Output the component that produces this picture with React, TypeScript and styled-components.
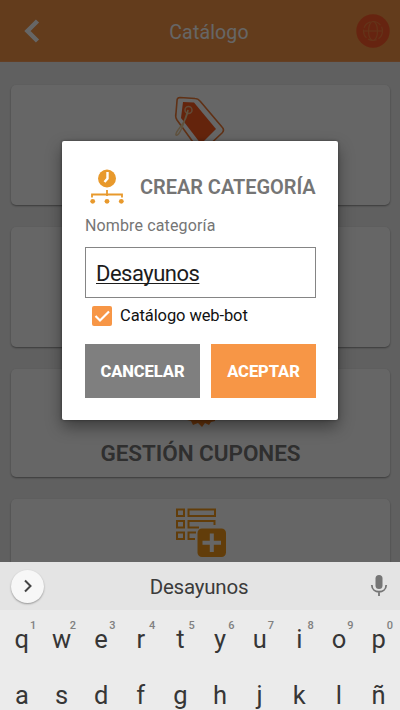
import React from "react";
import styled, { createGlobalStyle } from "styled-components";

const GlobalStyle = createGlobalStyle`
  * { box-sizing: border-box; }
  body { margin: 0; background: #f0f0f0; font-family: Roboto, "Liberation Sans", sans-serif; }
  button, input { font-family: inherit; }
`;

const Screen = styled.div`
  position: relative;
  width: 400px;
  height: 710px;
  overflow: hidden;
  display: flex;
  flex-direction: column;
`;

const Page = styled.div`
  height: 562px;
  overflow: hidden;
  background: #f0f0f0;
  flex: none;
`;

const Header = styled.header`
  height: 62px;
  background: #f79646;
  display: grid;
  grid-template-columns: 88px 1fr 70px;
  align-items: center;
  color: #fff;
  border-bottom: 1px solid #fb9f5a;
  svg { display: block; }
`;

const HeaderTitle = styled.h1`
  margin: 5px 0 0;
  font-size: 19.5px;
  font-weight: 400;
  line-height: 24px;
  letter-spacing: 0.15px;
  text-align: center;
`;

const BackButton = styled.div`
  padding-left: 23px;
`;

const Globe = styled.div`
  padding-left: 26px;
`;

const CardList = styled.main`
  display: flex;
  flex-direction: column;
  gap: 22px;
  padding: 23px 10px 0 11px;
`;

const Card = styled.section<{ $height: number }>`
  height: ${(p) => p.$height}px;
  flex: none;
  display: flex;
  flex-direction: column;
  align-items: center;
  background: #fff;
  border-radius: 5px;
  box-shadow: 0 1px 2px rgba(0, 0, 0, 0.4);
  svg { display: block; flex: none; }
`;

const IconSlot = styled.div<{ $top: number }>`
  padding-top: ${(p) => p.$top}px;
  flex: none;
`;

const CardTitle = styled.h2`
  margin: 12px 0 0;
  font-size: 22.5px;
  line-height: 28px;
  font-weight: 600;
  letter-spacing: -0.05px;
  color: #757575;
  white-space: nowrap;
`;

const Scrim = styled.div`
  position: absolute;
  inset: 0 0 148px 0;
  background: rgba(0, 0, 0, 0.6);
  display: flex;
  justify-content: center;
  align-items: flex-start;
  padding-top: 141px;
`;

const Dialog = styled.div`
  width: 276px;
  height: 279px;
  padding: 25px 22px 22px 23px;
  background: #fff;
  border-radius: 2px;
  box-shadow: 0 7px 16px rgba(0, 0, 0, 0.4), 0 0 3px rgba(0, 0, 0, 0.4);
  display: flex;
  flex-direction: column;
`;

const DialogHead = styled.div`
  display: flex;
  height: 40px;
  gap: 15px;
  padding-left: 5px;
  svg { flex: none; }
`;

const DialogTitle = styled.h2`
  margin: 9px 0 0;
  font-size: 20px;
  line-height: 24px;
  font-weight: 600;
  letter-spacing: -0.04px;
  color: #757575;
  white-space: nowrap;
`;

const Label = styled.label`
  margin-top: 10px;
  font-size: 16px;
  line-height: 20px;
  letter-spacing: 0.14px;
  color: #757575;
`;

const Field = styled.div`
  margin-top: 11px;
  height: 51px;
  border: 1px solid #858585;
  padding: 0 10px;
  font-size: 22px;
  line-height: 52px;
  letter-spacing: -0.5px;
  color: #1c1c1c;
  span {
    text-decoration: underline;
    text-decoration-thickness: 1px;
    text-decoration-skip-ink: none;
    text-underline-offset: 2px;
  }
`;

const CheckRow = styled.div`
  display: flex;
  align-items: center;
  gap: 8px;
  height: 20px;
  margin: 8px 0 0 7px;
  font-size: 16.5px;
  line-height: 20px;
  letter-spacing: -0.1px;
  color: #111;
`;

const Actions = styled.div`
  display: grid;
  grid-template-columns: 115px 105px;
  gap: 11px;
  margin-top: 18px;
`;

const ActionButton = styled.button<{ $primary?: boolean }>`
  height: 54px;
  padding: 1px 0 0;
  border: 0;
  background: ${(p) => (p.$primary ? "#f79646" : "#7f7f7f")};
  color: #fff;
  font-size: 16.5px;
  font-weight: 800;
  letter-spacing: -0.05px;
`;

const Keyboard = styled.div`
  height: 148px;
  flex: none;
  overflow: hidden;
  background: #ebebeb;
`;

const Suggestions = styled.div`
  height: 48px;
  background: #e4e4e4;
  display: grid;
  grid-template-columns: 70px 1fr 72px;
  align-items: center;
`;

const Expand = styled.div`
  width: 33px;
  height: 33px;
  margin-left: 11px;
  border-radius: 50%;
  background: #f7f7f7;
  box-shadow: 0 1px 2px rgba(0, 0, 0, 0.35);
  display: grid;
  place-items: center;
`;

const Word = styled.div`
  text-align: center;
  font-size: 20.5px;
  line-height: 26px;
  letter-spacing: -0.2px;
  margin-top: 2px;
  color: #3b3b3b;
`;

const Mic = styled.div`
  padding-left: 42px;
  svg { display: block; }
`;

const Keys = styled.div`
  display: grid;
  grid-template-columns: repeat(10, 39.65px);
  grid-auto-rows: 56px;
  padding-left: 2px;
`;

const Key = styled.div`
  position: relative;
  text-align: center;
  font-size: 25.5px;
  line-height: 30px;
  padding-top: 14px;
  color: #363636;
`;

const Hint = styled.span`
  position: absolute;
  top: 9px;
  left: 28px;
  font-size: 11px;
  line-height: 14px;
  font-weight: 500;
  color: #808080;
`;

const TagIcon = () => (
  <svg width="56" height="58" viewBox="0 0 56 58" fill="none">
    <path d="M7 1.5 22 2.5Q25 2.500 27 5L49 31Q52 34 49 37L31 54Q28 56 25 53L4 24Q2 21 3 17L4 5Q4 1.5 7 1.5Z" stroke="#ef7a35" strokeWidth="1.6" />
    <path d="M10 6 21 6.5 43 33 28 48 8 22Z" fill="#fa5a20" />
    <circle cx="15.5" cy="14" r="3.500" stroke="#f5b98a" strokeWidth="1.5" />
    <path d="M15 14C12 23 7 41 3 39C1 35 14 28 15 14Z" stroke="#f0cd9c" strokeWidth="1.5" />
  </svg>
);

const CouponIcon = () => (
  <svg width="34" height="40" viewBox="0 0 34 40">
    <path d="M3 18V33L7 34 9 38 14 36 18 40 21 36 25 38 27 35 31 34V18Z" fill="#ff7f1e" />
  </svg>
);

const ListPlusIcon = () => (
  <svg width="52" height="51" viewBox="0 0 52 51" fill="none">
    <g stroke="#f59a1b" strokeWidth="2">
      <path d="M2 1.5H9V8H2ZM2 13H9V19.5H2ZM2 24.5H9V31H2Z" />
      <path d="M13.5 1.5H40V8H13.5ZM39.5 17V13H13.5V19.5H24M21 24.5H13.5V31H20" />
    </g>
    <rect x="22.5" y="20.5" width="28.5" height="28.5" rx="4.5" fill="#f59a1b" />
    <path d="M36.8 25.5V44M27.5 34.7H46" stroke="#fff" strokeWidth="4" />
  </svg>
);

const CategoryIcon = () => (
  <svg width="35" height="38" viewBox="0 0 35 38" fill="none">
    <circle cx="17" cy="12.5" r="9" fill="#e8992c" />
    <path d="M17.5 6V12.5L14.500 16" stroke="#fff" strokeWidth="2.4" />
    <path d="M17 24V30M2 31.500V28.500H32V31.500" stroke="#e8992c" strokeWidth="1.8" />
    <circle cx="2.7" cy="35.3" r="2.4" fill="#e8992c" />
    <circle cx="17" cy="35.3" r="2.4" fill="#e8992c" />
    <circle cx="31.3" cy="35.3" r="2.4" fill="#e8992c" />
  </svg>
);

const letters = "qwertyuiopasdfghjklñ".split("");

export default function App() {
  return (
    <Screen>
      <GlobalStyle />
      <Page>
        <Header>
          <BackButton>
            <svg width="18" height="24" viewBox="0 0 18 24" fill="none">
              <path d="M14.5 2 4.5 12 14.5 22" stroke="#fff" strokeWidth="4.5" />
            </svg>
          </BackButton>
          <HeaderTitle>Catálogo</HeaderTitle>
          <Globe>
            <svg width="34" height="34" viewBox="0 0 34 34" fill="none">
              <circle cx="17" cy="17" r="16.7" fill="#ff5a28" />
              <g stroke="#f9803f" strokeWidth="1.2">
                <circle cx="17" cy="17" r="9.5" strokeDasharray="9 2" />
                <ellipse cx="17" cy="17" rx="4.5" ry="9.5" />
                <path d="M7 17H27" />
              </g>
            </svg>
          </Globe>
        </Header>
        <CardList>
          <Card $height={120}>
            <IconSlot $top={11}><TagIcon /></IconSlot>
          </Card>
          <Card $height={120} />
          <Card $height={108}>
            <IconSlot $top={18}><CouponIcon /></IconSlot>
            <CardTitle>GESTIÓN CUPONES</CardTitle>
          </Card>
          <Card $height={108}>
            <IconSlot $top={9}><ListPlusIcon /></IconSlot>
          </Card>
        </CardList>
      </Page>
      <Scrim>
        <Dialog>
          <DialogHead>
            <CategoryIcon />
            <DialogTitle>CREAR CATEGORÍA</DialogTitle>
          </DialogHead>
          <Label>Nombre categoría</Label>
          <Field><span>Desayunos</span></Field>
          <CheckRow>
            <svg width="20" height="20" viewBox="0 0 20 20" fill="none">
              <rect width="20" height="20" rx="2" fill="#f79646" />
              <path d="M3.5 10 8 14.5 17 5.5" stroke="#fff" strokeWidth="2.2" />
            </svg>
            Catálogo web-bot
          </CheckRow>
          <Actions>
            <ActionButton>CANCELAR</ActionButton>
            <ActionButton $primary>ACEPTAR</ActionButton>
          </Actions>
        </Dialog>
      </Scrim>
      <Keyboard>
        <Suggestions>
          <Expand>
            <svg width="12" height="14" viewBox="0 0 12 14" fill="none">
              <path d="M3 1.5 8.5 7 3 12.5" stroke="#444" strokeWidth="2" />
            </svg>
          </Expand>
          <Word>Desayunos</Word>
          <Mic>
            <svg width="18" height="24" viewBox="0 0 18 24" fill="none">
              <rect x="5.5" y="1" width="7" height="14" rx="3.5" fill="#757575" />
              <path d="M1.8 11C2 20 16 20 16.2 11M9 17.5V22" stroke="#757575" strokeWidth="1.8" />
            </svg>
          </Mic>
        </Suggestions>
        <Keys>
          {letters.map((letter, i) => (
            <Key key={letter}>
              {letter}
              {i < 10 && <Hint>{(i + 1) % 10}</Hint>}
            </Key>
          ))}
        </Keys>
      </Keyboard>
    </Screen>
  );
}
